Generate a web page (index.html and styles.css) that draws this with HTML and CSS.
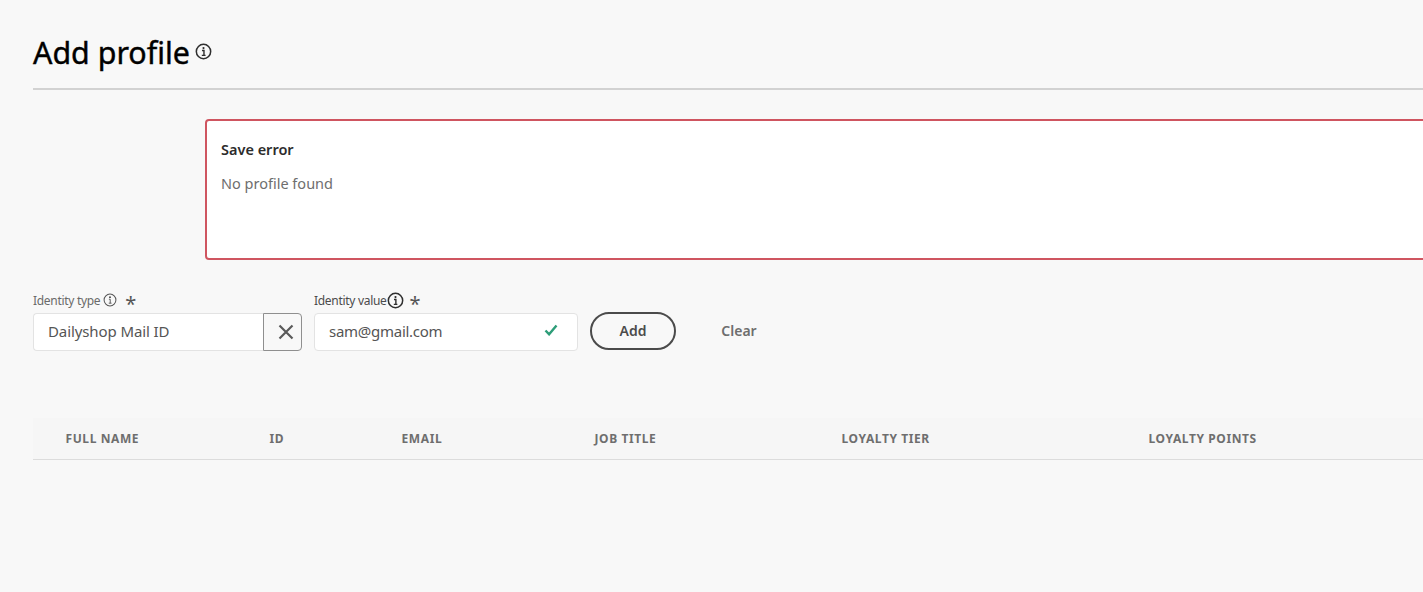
FILE: index.html
```html
<!DOCTYPE html>
<html lang="en">
<head>
<meta charset="utf-8">
<title>Add profile</title>
<link rel="stylesheet" href="styles.css">
</head>
<body>
<main class="page">
  <header class="head">
    <h1 class="title">Add profile</h1>
    <svg class="info info-title" viewBox="0 0 18 18"><circle cx="9" cy="9" r="7.6" class="ring"/><circle cx="9" cy="5.4" r="1.15" class="dot"/><path d="M7.4 8h2.1v5M7.2 13.1h4" class="stem"/></svg>
  </header>
  <section class="alert">
    <h2 class="alert-title">Save error</h2>
    <p class="alert-text">No profile found</p>
  </section>
  <form class="form">
    <div class="field field-type">
      <div class="label"><span>Identity type</span><svg class="info info-label" viewBox="0 0 18 18"><circle cx="9" cy="9" r="7.6" class="ring thin"/><circle cx="9" cy="5.4" r="1.1" class="dot"/><path d="M7.6 8h1.7v5M7.4 13.1h3.6" class="stem thin"/></svg><span class="req req-a">*</span></div>
      <div class="combo">
        <div class="input combo-input">Dailyshop Mail ID</div>
        <div class="clear-x"><svg viewBox="0 0 16 16" class="x"><path d="M1.5 1.5l13 13M14.5 1.5l-13 13"/></svg></div>
      </div>
    </div>
    <div class="field field-value">
      <div class="label dark"><span>Identity value</span><svg class="info info-label2" viewBox="0 0 18 18"><circle cx="9" cy="9" r="7.6" class="ring"/><circle cx="9" cy="5.4" r="1.15" class="dot"/><path d="M7.4 8h2v5M7.2 13.1h3.8" class="stem"/></svg><span class="req req-b">*</span></div>
      <div class="input value-input"><span class="value-text">sam@gmail.com</span><svg viewBox="0 0 14 12" class="check"><path d="M1.5 6.5l3.6 3.8L12.5 1.5"/></svg></div>
    </div>
    <button type="button" class="btn-add">Add</button>
    <button type="button" class="btn-clear">Clear</button>
  </form>
  <div class="thead">
    <div class="th c1">FULL NAME</div>
    <div class="th c2">ID</div>
    <div class="th c3">EMAIL</div>
    <div class="th c4">JOB TITLE</div>
    <div class="th c5">LOYALTY TIER</div>
    <div class="th c6">LOYALTY POINTS</div>
  </div>
</main>
</body>
</html>
```
FILE: styles.css
```css
* { box-sizing: border-box; }
html, body { margin: 0; height: 100%; }
body { background: #f8f8f8; font-family: "Noto Sans", "Open Sans", sans-serif; overflow: hidden; color: #4b4b4b; }
.page { width: 1423px; height: 592px; padding: 0 0 0 33px; overflow: hidden; }
.head { display: flex; align-items: flex-start; height: 90px; border-bottom: 2px solid #d2d2d2; padding-top: 32px; }
.title { margin: 0; font-size: 30.4px; line-height: 42px; font-weight: 400; color: #000; -webkit-text-stroke: .4px #000; }
.info { display: block; fill: none; }
.ring { fill: none; stroke: #2f2f2f; stroke-width: 1.6; }
.ring.thin { stroke: #555; stroke-width: 1.3; }
.dot { fill: #2f2f2f; }
.stem { fill: none; stroke: #2f2f2f; stroke-width: 1.5; }
.stem.thin { stroke: #555; stroke-width: 1.2; }
.info-title { width: 17px; height: 17px; margin: 11px 0 0 5px; }
.alert { margin: 29px 0 0 172px; width: 1300px; height: 141px; background: #fff; border: 2px solid #cf5560; border-radius: 4px; padding: 17px 14px; }
.alert-title { margin: 0; font-size: 14.5px; line-height: 22px; font-weight: 600; color: #2c2c2c; }
.alert-text { margin: 12px 0 0; font-size: 14.5px; line-height: 22px; color: #6e6e6e; }
.form { display: flex; align-items: flex-start; margin-top: 29px; height: 129px; }
.field { display: flex; flex-direction: column; }
.field-type { width: 269px; }
.field-value { width: 264px; margin-left: 12px; }
.label { display: flex; align-items: center; height: 24px; padding-bottom: 2px; font-size: 12px; letter-spacing: -.3px; color: #6a6a6a; }
.label.dark { color: #4b4b4b; }
.info-label { width: 14px; height: 14px; margin-left: 3px; }
.info-label2 { width: 17px; height: 17px; margin-left: 0; }
.req { font-size: 20px; line-height: 20px; height: 14px; color: #555; margin-top: 2px; }
.req-a { margin-left: 8px; }
.req-b { margin-left: 6px; }
.combo { display: flex; height: 38px; }
.input { height: 38px; background: #fff; border: 1px solid #e3e3e3; font-size: 15px; line-height: 34px; color: #555; padding-left: 14px; }
.combo-input { width: 230px; border-radius: 4px 0 0 4px; border-right: 0; letter-spacing: -.1px; }
.value-text { letter-spacing: -.27px; }
.clear-x { width: 39px; height: 38px; background: #f8f8f8; border: 1px solid #8f8f8f; border-radius: 0 4px 4px 0; display: flex; align-items: center; justify-content: center; padding-left: 7px; }
.x { width: 16px; height: 16px; fill: none; stroke: #5a5a5a; stroke-width: 2.2; }
.value-input { display: flex; justify-content: space-between; align-items: center; border-radius: 4px; padding: 0 19px 2px 14px; }
.check { width: 14px; height: 12px; fill: none; stroke: #2d9d78; stroke-width: 2.4; margin-top: -3px; }
.btn-add { margin: 23px 0 0 12px; width: 86px; height: 38px; border: 2px solid #4b4b4b; border-radius: 19px; background: transparent; font: 600 14px "Noto Sans", sans-serif; color: #4b4b4b; padding: 0 0 1px; }
.btn-clear { margin: 24px 0 0 27px; width: 72px; height: 38px; border: 0; background: transparent; font: 600 14px "Noto Sans", sans-serif; color: #6e6e6e; padding: 0 0 3px; }
.thead { display: flex; align-items: center; height: 42px; background: #f6f6f6; border-bottom: 1px solid #dcdcdc; width: 1390px; }
.th { font-size: 12px; font-weight: 700; color: #6e6e6e; letter-spacing: .6px; padding-left: 32.5px; }
.c1 { width: 204px; }
.c2 { width: 132px; }
.c3 { width: 193px; }
.c4 { width: 247px; }
.c5 { width: 307px; }
```
